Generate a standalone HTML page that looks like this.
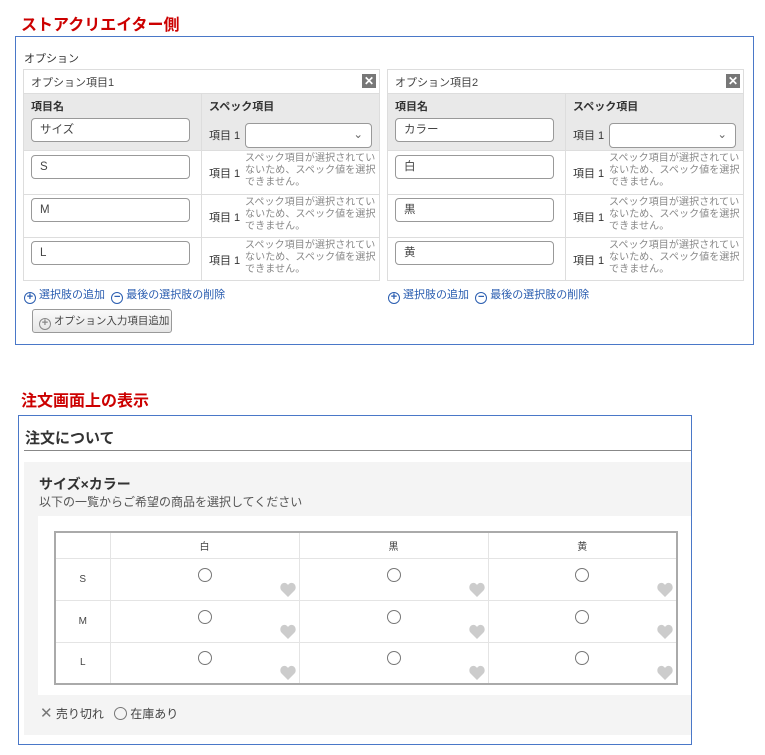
<!DOCTYPE html><html><head><meta charset="utf-8"><style>
*{box-sizing:border-box;margin:0;padding:0}
body{width:765px;height:755px;background:#fff;font-family:"Liberation Sans","Noto Sans CJK JP",sans-serif;position:relative;color:#333;font-size:11px}
.a{position:absolute;white-space:nowrap}
.h{color:#c00;font-weight:bold;font-size:16px}
.box{border:1px solid #4a78c8}
.pan{border:1px solid #ddd;background:#fff}
.inp{position:absolute;border:1px solid #999;border-radius:4px;background:#fff;height:24px;font-size:11.5px;line-height:22px;padding:0 8px;color:#444}
.gray{color:#888;font-size:10px;line-height:12px;letter-spacing:0.1px}
.lnk{color:#2a5db0;font-size:11px}
.ci{display:inline-block;width:12px;height:12px;border:1.5px solid #2a5db0;border-radius:50%;font-size:11px;line-height:9px;text-align:center;font-weight:bold;vertical-align:-2px}
td{border:1px solid #e4e4e4;text-align:center;font-size:10px;color:#444;position:relative}
.rc{display:inline-block;width:14px;height:14px;border:1px solid #777;border-radius:50%;margin-top:-6px}
.ht{position:absolute;right:3px;bottom:3px;width:16px;height:15px}
</style></head><body>
<div class="a h" style="left:21px;top:11px">ストアクリエイター側</div>
<div class="a box" style="left:15px;top:36px;width:739px;height:309px"></div>
<div class="a" style="left:24px;top:50px;font-size:11px">オプション</div>

<div class="a pan" style="left:23px;top:69px;width:357px;height:212px">
 <div class="a" style="left:7px;top:4px;font-size:11px;color:#444">オプション項目1</div>
 <div class="a" style="left:338px;top:4px;width:14px;height:14px;background:#777;color:#fff;font-size:12px;line-height:14px;text-align:center;font-weight:bold">✕</div>
 <div class="a" style="left:0;top:23px;width:355px;height:58px;background:#e9e9e9;border-top:1px solid #ddd;border-bottom:1px solid #ddd"></div>
 <div class="a" style="left:177px;top:23px;width:1px;height:187px;background:#ddd"></div>
 <div class="a" style="left:0;top:124px;width:355px;height:1px;background:#ddd"></div>
 <div class="a" style="left:0;top:167px;width:355px;height:1px;background:#ddd"></div>
 <div class="a" style="left:7px;top:28px;font-weight:bold">項目名</div>
 <div class="a" style="left:185px;top:28px;font-weight:bold">スペック項目</div>
 <div class="inp" style="left:7px;top:48px;width:159px">サイズ</div>
 <div class="a" style="left:185px;top:57px">項目 1</div>
 <div class="inp" style="left:221px;top:53px;width:127px;height:25px"><span style="position:absolute;right:8px;top:0;color:#666">⌄</span></div>
 <div class="inp" style="left:7px;top:85px;width:159px">S</div>
 <div class="inp" style="left:7px;top:128px;width:159px">M</div>
 <div class="inp" style="left:7px;top:171px;width:159px">L</div>
 <div class="a" style="left:185px;top:95px">項目 1</div>
 <div class="a" style="left:185px;top:139px">項目 1</div>
 <div class="a" style="left:185px;top:182px">項目 1</div>
 <div class="a gray" style="left:221px;top:83px">スペック項目が選択されてい<br>ないため、スペック値を選択<br>できません。</div>
 <div class="a gray" style="left:221px;top:127px">スペック項目が選択されてい<br>ないため、スペック値を選択<br>できません。</div>
 <div class="a gray" style="left:221px;top:170px">スペック項目が選択されてい<br>ないため、スペック値を選択<br>できません。</div>
</div>
<div class="a pan" style="left:387px;top:69px;width:357px;height:212px">
 <div class="a" style="left:7px;top:4px;font-size:11px;color:#444">オプション項目2</div>
 <div class="a" style="left:338px;top:4px;width:14px;height:14px;background:#777;color:#fff;font-size:12px;line-height:14px;text-align:center;font-weight:bold">✕</div>
 <div class="a" style="left:0;top:23px;width:355px;height:58px;background:#e9e9e9;border-top:1px solid #ddd;border-bottom:1px solid #ddd"></div>
 <div class="a" style="left:177px;top:23px;width:1px;height:187px;background:#ddd"></div>
 <div class="a" style="left:0;top:124px;width:355px;height:1px;background:#ddd"></div>
 <div class="a" style="left:0;top:167px;width:355px;height:1px;background:#ddd"></div>
 <div class="a" style="left:7px;top:28px;font-weight:bold">項目名</div>
 <div class="a" style="left:185px;top:28px;font-weight:bold">スペック項目</div>
 <div class="inp" style="left:7px;top:48px;width:159px">カラー</div>
 <div class="a" style="left:185px;top:57px">項目 1</div>
 <div class="inp" style="left:221px;top:53px;width:127px;height:25px"><span style="position:absolute;right:8px;top:0;color:#666">⌄</span></div>
 <div class="inp" style="left:7px;top:85px;width:159px">白</div>
 <div class="inp" style="left:7px;top:128px;width:159px">黒</div>
 <div class="inp" style="left:7px;top:171px;width:159px">黄</div>
 <div class="a" style="left:185px;top:95px">項目 1</div>
 <div class="a" style="left:185px;top:139px">項目 1</div>
 <div class="a" style="left:185px;top:182px">項目 1</div>
 <div class="a gray" style="left:221px;top:83px">スペック項目が選択されてい<br>ないため、スペック値を選択<br>できません。</div>
 <div class="a gray" style="left:221px;top:127px">スペック項目が選択されてい<br>ないため、スペック値を選択<br>できません。</div>
 <div class="a gray" style="left:221px;top:170px">スペック項目が選択されてい<br>ないため、スペック値を選択<br>できません。</div>
</div>
<div class="a lnk" style="left:24px;top:286px"><span class="ci">+</span> 選択肢の追加 &nbsp;<span class="ci">−</span> 最後の選択肢の削除</div>
<div class="a lnk" style="left:388px;top:286px"><span class="ci">+</span> 選択肢の追加 &nbsp;<span class="ci">−</span> 最後の選択肢の削除</div>
<div class="a" style="left:32px;top:309px;width:140px;height:24px;border:1px solid #999;border-radius:3px;background:linear-gradient(#fafafa,#e6e6e6);font-size:10.5px;line-height:22px;padding:0 6px;color:#444"><span class="ci" style="border-color:#888;color:#888">+</span> オプション入力項目追加</div>

<div class="a h" style="left:21px;top:387px">注文画面上の表示</div>
<div class="a box" style="left:18px;top:415px;width:674px;height:330px"></div>
<div class="a" style="left:25px;top:427px;font-size:15px;font-weight:bold;color:#333">注文について</div>
<div class="a" style="left:24px;top:450px;width:667px;height:1px;background:#888"></div>
<div class="a" style="left:24px;top:462px;width:667px;height:273px;background:#f4f4f4"></div>
<div class="a" style="left:39px;top:474px;font-size:14px;font-weight:bold;color:#333">サイズ×カラー</div>
<div class="a" style="left:39px;top:493px;font-size:12px;color:#555">以下の一覧からご希望の商品を選択してください</div>
<div class="a" style="left:38px;top:516px;width:653px;height:179px;background:#fff"></div>
<svg width="0" height="0" style="position:absolute"><defs><symbol id="hh" viewBox="0 0 16 15"><path d="M8 15L1.5 8.5C-0.5 6.5 0 2 3.5 1 5.5 0.5 7 1.5 8 3 9 1.5 10.5 0.5 12.5 1 16 2 16.5 6.5 14.5 8.5Z" fill="#ccc"/></symbol></defs></svg>
<table class="a" style="left:54px;top:531px;width:624px;height:152px;border-collapse:collapse;border:2px solid #aaa">
<tr style="height:26px"><td style="width:55px"></td><td style="width:189px">白</td><td style="width:189px">黒</td><td>黄</td></tr>
<tr style="height:42px"><td>S</td><td><span class="rc"></span><svg class="ht"><use href="#hh"/></svg></td><td><span class="rc"></span><svg class="ht"><use href="#hh"/></svg></td><td><span class="rc"></span><svg class="ht"><use href="#hh"/></svg></td></tr>
<tr style="height:42px"><td>M</td><td><span class="rc"></span><svg class="ht"><use href="#hh"/></svg></td><td><span class="rc"></span><svg class="ht"><use href="#hh"/></svg></td><td><span class="rc"></span><svg class="ht"><use href="#hh"/></svg></td></tr>
<tr style="height:42px"><td>L</td><td><span class="rc"></span><svg class="ht"><use href="#hh"/></svg></td><td><span class="rc"></span><svg class="ht"><use href="#hh"/></svg></td><td><span class="rc"></span><svg class="ht"><use href="#hh"/></svg></td></tr>
</table>
<div class="a" style="left:40px;top:704px;font-size:12px;color:#444"><span style="color:#777;font-size:15px">✕</span> 売り切れ &nbsp; <span style="display:inline-block;width:13px;height:13px;border:1px solid #777;border-radius:50%;vertical-align:-2px"></span> 在庫あり</div>
</body></html>
